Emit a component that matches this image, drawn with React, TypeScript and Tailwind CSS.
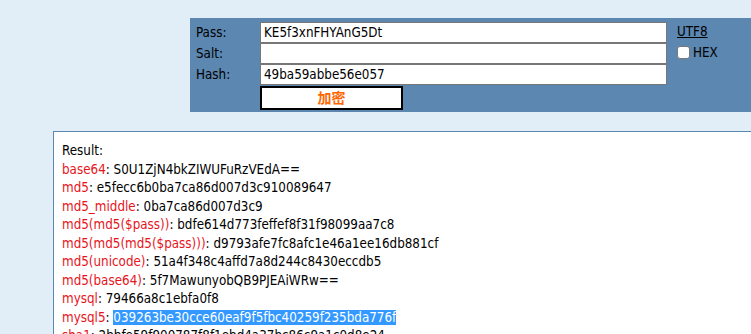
import React from "react";

const font = { fontFamily: '"DejaVu Sans Condensed", "DejaVu Sans", "Noto Sans CJK SC", sans-serif' };

const results: { label: string; value: string; selected?: boolean }[] = [
  { label: "base64", value: "S0U1ZjN4bkZIWUFuRzVEdA==" },
  { label: "md5", value: "e5fecc6b0ba7ca86d007d3c910089647" },
  { label: "md5_middle", value: "0ba7ca86d007d3c9" },
  { label: "md5(md5($pass))", value: "bdfe614d773feffef8f31f98099aa7c8" },
  { label: "md5(md5(md5($pass)))", value: "d9793afe7fc8afc1e46a1ee16db881cf" },
  { label: "md5(unicode)", value: "51a4f348c4affd7a8d244c8430eccdb5" },
  { label: "md5(base64)", value: "5f7MawunyobQB9PJEAiWRw==" },
  { label: "mysql", value: "79466a8c1ebfa0f8" },
  { label: "mysql5", value: "039263be30cce60eaf9f5fbc40259f235bda776f", selected: true },
  { label: "sha1", value: "2bbfe59f900787f8f1ebd4a37bc86c9a1c0d8e24" },
];

export default function App() {
  return (
    <div className="h-[334px] w-[751px] overflow-hidden bg-[#e1eef7] text-[13.3px] text-black" style={font}>
      {/* form panel */}
      <div className="ml-[190px] mt-[18px] flex h-[94px] bg-[#5b87b1] pt-[4px]">
        <div className="flex w-[70px] flex-col pl-[6px]">
          <div className="flex h-[21px] items-center">Pass:</div>
          <div className="flex h-[21px] items-center">Salt:</div>
          <div className="flex h-[21px] items-center">Hash:</div>
        </div>
        <div className="flex w-[407px] flex-col">
          <div className="flex h-[21px] items-center border border-[#777] bg-white px-[3px]">KE5f3xnFHYAnG5Dt</div>
          <div className="h-[21px] border border-[#777] bg-white" />
          <div className="flex h-[21px] items-center border border-[#777] bg-white px-[3px]">49ba59abbe56e057</div>
          <button className="mt-[1px] flex h-[24px] w-[143px] items-center justify-center border-2 border-black bg-white text-[14px] font-bold text-[#ff6600]">
            加密
          </button>
        </div>
        <div className="ml-[10px] flex flex-col">
          <div className="flex h-[19px] items-center underline">UTF8</div>
          <div className="flex h-[23px] items-center">
            <span className="mr-[3px] inline-block h-[13px] w-[13px] rounded-[3px] border border-[#777] bg-white" />
            HEX
          </div>
        </div>
      </div>

      {/* result box */}
      <div className="ml-[53px] mt-[19px] h-[220px] border-l border-t border-[#5b87b1] bg-white pl-[8px] pt-[10px] leading-[18.5px]">
        <div>Result:</div>
        {results.map((r) => (
          <div key={r.label} className="whitespace-nowrap">
            <span className="text-[#e8141c]">{r.label}</span>
            {": "}
            {r.selected ? (
              <span className="bg-[#3399ff] text-white">{r.value}</span>
            ) : (
              r.value
            )}
          </div>
        ))}
      </div>
    </div>
  );
}
